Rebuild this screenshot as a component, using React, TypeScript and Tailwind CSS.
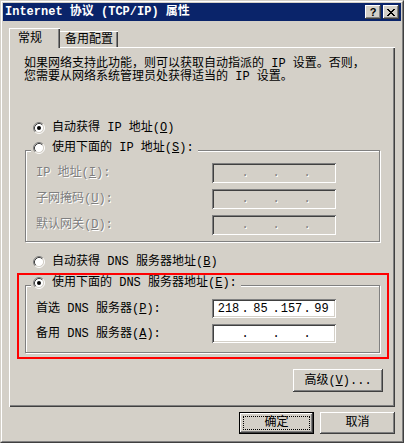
import { Fragment } from "react";

const raised =
  "shadow-[inset_-1px_-1px_#404040,inset_1px_1px_#ffffff,inset_-2px_-2px_#808080,inset_2px_2px_#d4d0c8]";
const sunken =
  "shadow-[inset_1px_1px_#808080,inset_-1px_-1px_#ffffff,inset_2px_2px_#404040,inset_-2px_-2px_#d4d0c8]";
const etched = "border border-[#808080] shadow-[inset_1px_1px_#ffffff,1px_1px_#ffffff]";
const grayText = "text-[#808080] [text-shadow:1px_1px_0_#ffffff]";

function Radio({ checked }: { checked?: boolean }) {
  return (
    <svg width="12" height="12" viewBox="0 0 12 12" className="shrink-0">
      <circle cx="6" cy="6" r="4.5" fill="#ffffff" />
      <path d="M2.11 9.89A5.5 5.5 0 0 1 9.89 2.11" fill="none" stroke="#808080" />
      <path d="M9.89 2.11A5.5 5.5 0 0 1 2.11 9.89" fill="none" stroke="#ffffff" />
      <path d="M2.82 9.18A4.5 4.5 0 0 1 9.18 2.82" fill="none" stroke="#404040" />
      <path d="M9.18 2.82A4.5 4.5 0 0 1 2.82 9.18" fill="none" stroke="#d4d0c8" />
      {checked && <circle cx="6" cy="6" r="2" fill="#000000" />}
    </svg>
  );
}

function CloseIcon() {
  return (
    <svg width="8" height="7" viewBox="0 0 8 7" shapeRendering="crispEdges">
      <path
        d="M0 0h2v1h-2zM6 0h2v1h-2zM1 1h2v1h-2zM5 1h2v1h-2zM2 2h4v1h-4zM3 3h2v1h-2zM2 4h4v1h-4zM1 5h2v1h-2zM5 5h2v1h-2zM0 6h2v1h-2zM6 6h2v1h-2z"
        fill="#000000"
      />
    </svg>
  );
}

const segWidths = ["w-[29px]", "w-[27px]", "w-[27px]", "flex-1"];

function IpField({ parts, disabled, h }: { parts: string[]; disabled?: boolean; h: string }) {
  return (
    <div
      className={`flex items-center px-[2px] ${h} ${sunken} ${
        disabled ? "bg-[#d4d0c8] " + grayText : "bg-white text-black"
      }`}
    >
      {parts.map((p, i) => (
        <Fragment key={i}>
          {i > 0 && <span className="flex w-[4px] justify-center">.</span>}
          <span className={`${segWidths[i]} flex justify-center`}>{p}</span>
        </Fragment>
      ))}
    </div>
  );
}

function Legend({ children, checked }: { children: React.ReactNode; checked?: boolean }) {
  return (
    <legend className="ml-[5px] pl-[2px] pr-[4px] h-[16px] pb-[4px] flex items-center gap-[7px] bg-[#d4d0c8]">
      <Radio checked={checked} />
      <span className="whitespace-pre">{children}</span>
    </legend>
  );
}

export default function App() {
  const empty = ["", "", "", ""];
  return (
    <div className="w-[404px] h-[443px] bg-[#d4d0c8] border border-t-[#d4d0c8] border-l-[#d4d0c8] border-r-[#404040] border-b-[#404040] text-[12px] leading-[16px] text-black [font-family:'Liberation_Mono','Noto_Sans_CJK_SC',monospace]">
      <div className="h-full border border-t-white border-l-white border-r-[#808080] border-b-[#808080] p-[1px] flex flex-col">
        {/* title bar */}
        <div className="h-[18px] bg-[#0a246a] flex items-center justify-between px-[2px]">
          <span className="text-white font-bold leading-[18px] whitespace-pre">Internet 协议 (TCP/IP) 属性</span>
          <div className="flex gap-[2px]">
            <div className={`w-[16px] h-[14px] bg-[#d4d0c8] ${raised} flex items-center justify-center`}>
              <span className="font-bold text-[11px] leading-none [font-family:'Liberation_Sans',sans-serif]">?</span>
            </div>
            <div className={`w-[16px] h-[14px] bg-[#d4d0c8] ${raised} flex items-center justify-center`}>
              <CloseIcon />
            </div>
          </div>
        </div>

        <div className="px-[6px] flex flex-col">
          {/* tabs */}
          <div className="mt-[7px] flex items-end h-[19px]">
            <div className="relative z-10 -mb-px h-[20px] w-[51px] bg-[#d4d0c8] border-t border-l border-white shadow-[inset_-1px_0_#404040,inset_-2px_0_#808080] pl-[8px] flex items-center">
              常规
            </div>
            <div className="h-[16px] w-[58px] border-t border-white shadow-[inset_-1px_0_#404040,inset_-2px_0_#808080] pl-[5px] flex items-center">
              备用配置
            </div>
          </div>

          {/* panel */}
          <div className="h-[360px] border-t border-l border-white shadow-[inset_-1px_-1px_#404040,inset_-2px_-2px_#808080] flex flex-col">
            <p className="mt-[10px] pl-[14px] leading-[13px] whitespace-pre">
              如果网络支持此功能，则可以获取自动指派的 IP 设置。否则，
              <br />
              您需要从网络系统管理员处获得适当的 IP 设置。
            </p>

            <div className="mt-[36px] ml-[23px] h-[16px] flex items-center gap-[7px]">
              <Radio checked />
              <span className="whitespace-pre">
                自动获得 IP 地址(<u>O</u>)
              </span>
            </div>

            <fieldset className={`mt-[6px] ml-[15px] w-[355px] ${etched} pb-[6px]`}>
              <Legend>
                使用下面的 IP 地址(<u>S</u>):
              </Legend>
              <div className="pt-[5px] pl-[10px] grid grid-cols-[176px_124px] gap-y-[6px] items-center">
                <span className={`whitespace-pre ${grayText}`}>
                  IP 地址(<u>I</u>):
                </span>
                <IpField parts={empty} disabled h="h-[20px]" />
                <span className={`whitespace-pre ${grayText}`}>
                  子网掩码(<u>U</u>):
                </span>
                <IpField parts={empty} disabled h="h-[20px]" />
                <span className={`whitespace-pre ${grayText}`}>
                  默认网关(<u>D</u>):
                </span>
                <IpField parts={empty} disabled h="h-[20px]" />
              </div>
            </fieldset>

            <div className="mt-[12px] ml-[23px] h-[16px] flex items-center gap-[7px]">
              <Radio />
              <span className="whitespace-pre">
                自动获得 DNS 服务器地址(<u>B</u>)
              </span>
            </div>

            <div className="mt-[3px] ml-[7px] w-[372px] border-2 border-[#ff0000] pt-[2px] pl-[6px] pb-[4px]">
              <fieldset className={`w-[355px] ${etched} pb-[9px]`}>
                <Legend checked>
                  使用下面的 DNS 服务器地址(<u>E</u>):
                </Legend>
                <div className="pt-[6px] pl-[10px] grid grid-cols-[176px_124px] gap-y-[6px] items-center">
                  <span className="whitespace-pre">
                    首选 DNS 服务器(<u>P</u>):
                  </span>
                  <IpField parts={["218", "85", "157", "99"]} h="h-[19px]" />
                  <span className="whitespace-pre">
                    备用 DNS 服务器(<u>A</u>):
                  </span>
                  <IpField parts={empty} h="h-[19px]" />
                </div>
              </fieldset>
            </div>

            <div className="mt-[10px] flex justify-end pr-[12px]">
              <button className={`w-[90px] h-[23px] bg-[#d4d0c8] ${raised} flex items-center justify-center whitespace-pre`}>
                高级(<u>V</u>)...
              </button>
            </div>
          </div>

          {/* dialog buttons */}
          <div className="mt-[5px] flex justify-end gap-[6px]">
            <button className={`w-[75px] h-[22px] bg-[#d4d0c8] border border-black ${raised} flex p-0`}>
              <span className="m-[3px] flex-1 border border-dotted border-black flex items-center justify-center leading-none">
                确定
              </span>
            </button>
            <button className={`w-[75px] h-[22px] bg-[#d4d0c8] ${raised} flex items-center justify-center`}>
              取消
            </button>
          </div>
        </div>
      </div>
    </div>
  );
}
